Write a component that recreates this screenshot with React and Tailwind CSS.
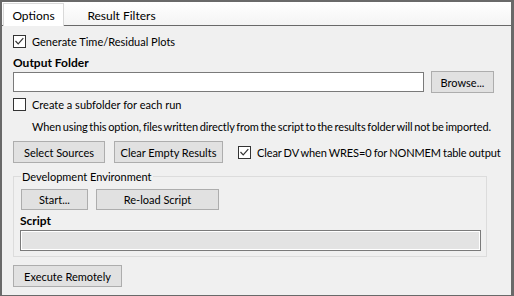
import React from "react";

const Check = ({ checked }) => (
  <span className="w-[13px] h-[13px] border border-[#333333] bg-white flex items-center justify-center shrink-0">
    {checked && (
      <svg width="11" height="11" viewBox="0 0 11 11">
        <path d="M1.5 5 L4.2 7.8 L9.3 2.2" stroke="#333333" strokeWidth="1.2" fill="none" />
      </svg>
    )}
  </span>
);

const Btn = ({ children, className = "" }) => (
  <div
    className={
      "bg-[#e1e1e1] border border-[#adadad] flex items-center justify-center text-black whitespace-nowrap shrink-0 " +
      className
    }
  >
    {children}
  </div>
);

export default function App() {
  return (
    <div
      className="w-[514px] h-[296px] bg-[#f0f0f0] border-[#696969] border-t-2 border-l-2 border-r-[3px] border-b flex flex-col text-[11px] leading-[15px] text-black overflow-hidden whitespace-nowrap"
      style={{ fontFamily: "Lato, 'Liberation Sans', sans-serif" }}
    >
      {/* Tab strip */}
      <div className="h-[24px] shrink-0 flex items-start bg-gradient-to-b from-white to-[#f4f4f4] border-b border-[#696969]">
        <div className="relative z-10 mt-px ml-px w-[61px] h-[23px] bg-white border-l border-t border-r border-[#d9d9d9] flex items-center justify-center pt-px text-[12px]">
          Options
        </div>
        <div className="mt-px h-[23px] w-[115px] flex items-center justify-center pt-px text-[12px]">
          Result Filters
        </div>
      </div>

      {/* Content */}
      <div className="flex flex-col pl-[11px]">
        <div className="mt-[9px] h-[13px] flex items-center">
          <Check checked />
          <span className="ml-[6px]">Generate Time/Residual Plots</span>
        </div>

        <div className="mt-[7px] font-bold text-[12px]">Output Folder</div>

        <div className="mt-px h-[22px] flex items-center">
          <div className="w-[411px] h-[20px] bg-white border border-[#7a7a7a] shrink-0" />
          <Btn className="ml-[7px] w-[63px] h-[22px]">Browse...</Btn>
        </div>

        <div className="mt-[5px] h-[13px] flex items-center">
          <Check />
          <span className="ml-[6px]">Create a subfolder for each run</span>
        </div>

        <div className="mt-[8px] pl-[19px] [word-spacing:-1px] tracking-[-0.1px]">
          When using this option, files written directly from the script to the results folder will not be imported.
        </div>

        <div className="mt-[7px] h-[22px] flex items-center">
          <Btn className="w-[92px] h-[22px]">Select Sources</Btn>
          <Btn className="ml-[9px] w-[109px] h-[22px]">Clear Empty Results</Btn>
          <span className="ml-[15px]">
            <Check checked />
          </span>
          <span className="ml-[6px] [word-spacing:-0.6px] tracking-[-0.1px]">Clear DV when WRES=0 for NONMEM table output</span>
        </div>

        {/* Group box */}
        <div className="relative mt-[13px] w-[474px] border border-[#dcdcdc] pl-[6px] pr-[5px] pb-[5px] flex flex-col">
          <span className="absolute -top-[8px] left-[7px] px-[1px] bg-[#f0f0f0]">
            Development Environment
          </span>
          <div className="mt-[12px] flex items-center">
            <Btn className="ml-px w-[67px] h-[21px]">Start...</Btn>
            <Btn className="ml-[8px] w-[123px] h-[21px]">Re-load Script</Btn>
          </div>
          <div className="mt-[3px] font-bold text-[12px]">Script</div>
          <div className="mt-[2px] h-[21px] bg-[#e3e3e3] border border-[#7a7a7a] shadow-[inset_0_0_0_1px_#ffffff]" />
        </div>

        <div className="mt-[8px]">
          <Btn className="w-[109px] h-[22px]">Execute Remotely</Btn>
        </div>
      </div>
    </div>
  );
}
